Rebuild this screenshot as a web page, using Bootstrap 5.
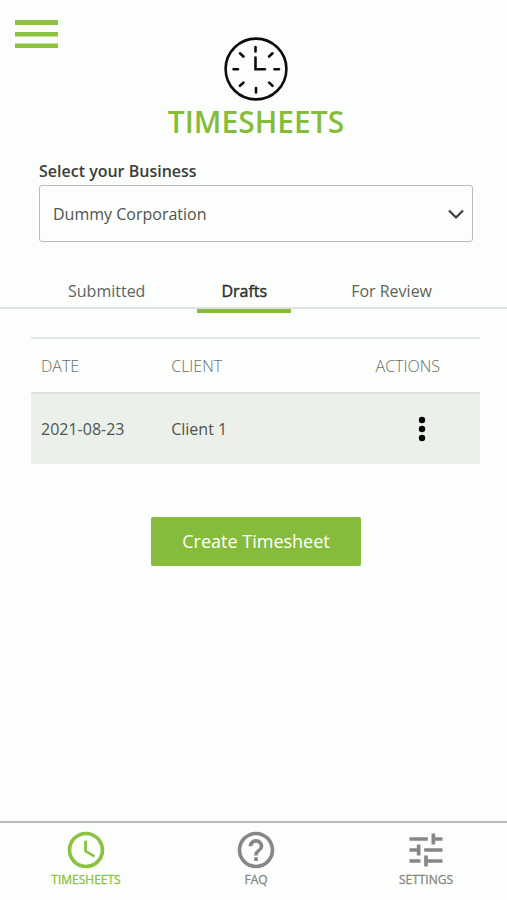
<!DOCTYPE html>
<html lang="en">
<head>
<meta charset="utf-8">
<meta name="viewport" content="width=device-width, initial-scale=1">
<title>Timesheets</title>
<link rel="stylesheet" href="https://cdn.jsdelivr.net/npm/bootstrap@5.3.0/dist/css/bootstrap.min.css">
<style>
:root { --brand: #86bc3b; --page: #fcfefb; }
body { font-family: "Open Sans", "Noto Sans", sans-serif; font-size: 16px; line-height: 24px; background: var(--page); color: #505350; overflow-x: hidden; }
.menu-btn { top: 18px; left: 15px; line-height: 0; color: #8bc23f; }
.page-head { padding: 36px 0 0 5px; }
.page-title { font-size: 30px; line-height: 40px; font-weight: 600; color: var(--brand); margin: 0; }
.business { padding: 17px 34px 0 39px; }
.business label { font-weight: 600; color: #3a3d3a; line-height: 24px; margin-bottom: 2px; }
.business .form-select { height: 57px; padding: 0 40px 0 13px; font-size: 16px; color: #505350; background: transparent; border: 1px solid #b9bcb9; border-radius: 3px; }
.chevron { right: 8px; top: 20px; pointer-events: none; }
.tabs { margin-top: 31px; padding-left: 44px; border-bottom: 2px solid #e0e4e0; gap: 28px; }
.tab-btn { padding: 6px 24px; height: 40px; border: 0; background: none; color: #606360; margin-bottom: -6px; border-bottom: 4px solid transparent; white-space: nowrap; }
.tab-btn.active { color: #2a2d2a; border-bottom-color: var(--brand); -webkit-text-stroke: 0.4px #2a2d2a; }
.tab-btn:last-child { margin-left: 8px; }
.sheet-wrap { padding: 28px 27px 0 31px; }
.sheets { --bs-table-bg: transparent; table-layout: fixed; color: #505350; border-top: 2px solid #e4e8e4; }
.sheets th { font-weight: 300; color: #6a6d6a; padding: 15px 10px 14px; height: 55px; border-bottom: 2px solid #dde2dd; }
.sheets td { background: #ebf0eb; color: #505350; padding: 0 10px; height: 71px; vertical-align: middle; border: 0; }
.sheets .col-date, .sheets .col-client { width: 29%; }
.sheets .col-actions { padding-right: 40px; }
.sheets .cell-actions { padding-right: 46px; }
.create-btn { margin: 53px 0 0 5px; width: 210px; height: 49px; font-size: 18px; color: #fff; background: var(--brand); border: 0; border-radius: 2px; }
.bottom-bar { border-top: 2px solid #b9bcb9; height: 79px; }
.bar-items { display: grid; grid-template-columns: repeat(3, 1fr); margin: 0 -4px 0 1px; padding-top: 5px; }
.bar-link { font-size: 12px; line-height: 15px; font-weight: 400; color: #858885; -webkit-text-stroke: 0.3px currentColor; }
.bar-link.current { color: #8bc23f; }
</style>
<script src="https://cdn.jsdelivr.net/npm/bootstrap@5.3.0/dist/js/bootstrap.bundle.min.js"></script>
</head>
<body>
<div class="d-flex flex-column min-vh-100 position-relative">
  <button type="button" class="menu-btn btn border-0 p-0 position-absolute" aria-label="Open menu">
    <svg width="43" height="32" viewBox="0 0 43 32" fill="currentColor"><path d="M0 2h43v5H0zM0 14h43v4.500H0zM0 25.500h43v4.500H0z"/></svg>
  </button>

  <header class="page-head d-flex flex-column align-items-center">
    <svg width="66" height="66" viewBox="0 0 66 66" fill="none" stroke="#0b0d0b" stroke-width="2.600" stroke-linecap="round" aria-hidden="true">
      <circle cx="33" cy="33" r="30.400"/>
      <path d="M32.500 21.500v11.800h9.500M32.500 11v4.500M33 52v4.500M10.500 33.300h4.500M51.500 33.300h4.500M17 17.300l3.400 3.200M49.500 17.300l-3.400 3.200M17 49.800l3.400-3.200M49.500 49.800l-3.400-3.200"/>
    </svg>
    <h1 class="page-title">TIMESHEETS</h1>
  </header>

  <main class="flex-grow-1">
    <div class="business">
      <label for="business" class="d-block">Select your Business</label>
      <div class="position-relative">
        <select id="business" class="form-select">
          <option>Dummy Corporation</option>
        </select>
        <svg class="chevron position-absolute" width="18" height="18" viewBox="0 0 18 18" fill="none" stroke="#3a3d3a" stroke-width="2.200"><path d="M2 5.500l7 7 7-7"/></svg>
      </div>
    </div>

    <div class="tabs d-flex" role="tablist">
      <button type="button" class="tab-btn" role="tab" aria-selected="false">Submitted</button>
      <button type="button" class="tab-btn active" role="tab" aria-selected="true">Drafts</button>
      <button type="button" class="tab-btn" role="tab" aria-selected="false">For Review</button>
    </div>

    <div class="sheet-wrap">
      <table class="table sheets mb-0">
        <thead>
          <tr><th scope="col" class="col-date">DATE</th><th scope="col" class="col-client">CLIENT</th><th scope="col" class="col-actions text-end">ACTIONS</th></tr>
        </thead>
        <tbody>
          <tr>
            <td>2021-08-23</td>
            <td>Client 1</td>
            <td class="cell-actions text-end">
              <button type="button" class="btn border-0 p-0" aria-label="Row actions">
                <svg class="d-block" width="24" height="28" viewBox="0 0 24 28" fill="#050605"><circle cx="12" cy="5" r="3.200"/><circle cx="12" cy="14" r="3.200"/><circle cx="12" cy="23" r="3.200"/></svg>
              </button>
            </td>
          </tr>
        </tbody>
      </table>
    </div>

    <div class="text-center">
      <button type="button" class="create-btn btn p-0">Create Timesheet</button>
    </div>
  </main>

  <nav class="bottom-bar" aria-label="Main">
    <div class="bar-items">
      <a href="#timesheets" class="bar-link current d-flex flex-column align-items-center text-decoration-none" aria-current="page">
        <svg width="44" height="44" viewBox="0 0 24 24" fill="currentColor"><path d="M11.990 2C6.470 2 2 6.480 2 12s4.470 10 9.990 10C17.520 22 22 17.520 22 12S17.520 2 11.990 2zM12 20c-4.420 0-8-3.580-8-8s3.580-8 8-8 8 3.580 8 8-3.580 8-8 8zm.5-13H11v6l5.250 3.150.75-1.230-4.500-2.670z"/></svg>
        <span>TIMESHEETS</span>
      </a>
      <a href="#faq" class="bar-link d-flex flex-column align-items-center text-decoration-none">
        <svg width="44" height="44" viewBox="0 0 24 24" fill="currentColor"><path d="M11 18h2v-2h-2v2zm1-16C6.480 2 2 6.480 2 12s4.480 10 10 10 10-4.480 10-10S17.520 2 12 2zm0 18c-4.410 0-8-3.590-8-8s3.590-8 8-8 8 3.590 8 8-3.590 8-8 8zm0-14c-2.210 0-4 1.790-4 4h2c0-1.100.9-2 2-2s2 .9 2 2c0 2-3 1.750-3 5h2c0-2.250 3-2.500 3-5 0-2.210-1.790-4-4-4z"/></svg>
        <span>FAQ</span>
      </a>
      <a href="#settings" class="bar-link d-flex flex-column align-items-center text-decoration-none">
        <svg width="44" height="44" viewBox="0 0 24 24" fill="currentColor"><path d="M3 17v2h6v-2H3zM3 5v2h10V5H3zm10 16v-2h8v-2h-8v-2h-2v6h2zM7 9v2H3v2h4v2h2V9H7zm14 4v-2H11v2h10zm-6-4h2V7h4V5h-4V3h-2v6z"/></svg>
        <span>SETTINGS</span>
      </a>
    </div>
  </nav>
</div>
</body>
</html>
